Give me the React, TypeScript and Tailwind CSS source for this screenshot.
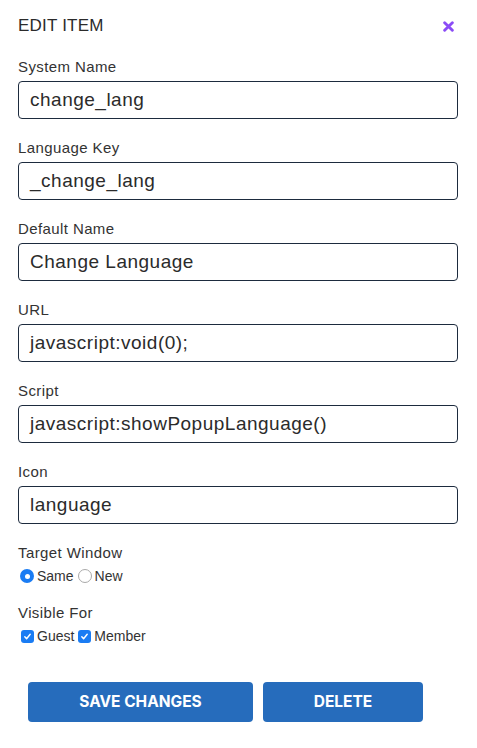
import React from "react";

const fields = [
  ["System Name", "change_lang"],
  ["Language Key", "_change_lang"],
  ["Default Name", "Change Language"],
  ["URL", "javascript:void(0);"],
  ["Script", "javascript:showPopupLanguage()"],
  ["Icon", "language"],
] as const;

function Radio({ checked, label }: { checked?: boolean; label: string }) {
  return (
    <label className="flex items-center gap-[3px]">
      {checked ? (
        <span className="w-[14px] h-[14px] rounded-full bg-[#1a7cf3] grid place-items-center">
          <span className="w-[5px] h-[5px] rounded-full bg-white" />
        </span>
      ) : (
        <span className="w-[14px] h-[14px] rounded-full border border-[#a9a9a9] bg-white" />
      )}
      <span>{label}</span>
    </label>
  );
}

function Check({ label }: { label: string }) {
  return (
    <label className="flex items-center gap-[3px]">
      <span className="w-[13px] h-[13px] rounded-[3px] bg-[#1a7cf3] grid place-items-center">
        <svg width="9" height="9" viewBox="0 0 10 10" fill="none" stroke="white" strokeWidth="1.6" strokeLinecap="round" strokeLinejoin="round">
          <path d="M2 5.3l2 2.2 4-5" />
        </svg>
      </span>
      <span>{label}</span>
    </label>
  );
}

export default function App() {
  return (
    <div className="w-[477px] h-[748px] bg-white pl-[18px] pr-[19px] pt-[16px] text-[#333] font-[family-name:'Liberation_Sans',Arial,sans-serif]">
      <div className="flex items-center justify-between h-[20px]">
        <h1 className="text-[17px] leading-[20px] tracking-[0.2px] text-[#2b2b2b]">EDIT ITEM</h1>
        <svg width="11" height="11" viewBox="0 0 10 10" className="mr-[4px]" stroke="#8b4cf6" strokeWidth="2.6" strokeLinecap="round">
          <path d="M1.5 1.5l7 7M8.5 1.5l-7 7" />
        </svg>
      </div>

      <div className="mt-[21px] flex flex-col gap-[19px]">
        {fields.map(([k, v]) => (
          <div key={k}>
            <div className="text-[15px] leading-[20px] tracking-[0.4px] text-[#333]">{k}</div>
            <div className="mt-[4px] h-[38px] w-[440px] border border-[#1d2b3e] rounded-[4px] px-[11px] flex items-center text-[19px] tracking-[0.5px] text-[#2b2b2b]">
              {v}
            </div>
          </div>
        ))}

        <div>
          <div className="text-[15px] leading-[20px] tracking-[0.4px]">Target Window</div>
          <div className="mt-[3px] h-[20px] flex items-center gap-[4px] text-[14px] pl-[2px]">
            <Radio checked label="Same" />
            <Radio label="New" />
          </div>
        </div>
      </div>

      <div className="mt-[17px]">
        <div className="text-[15px] leading-[20px] tracking-[0.4px]">Visible For</div>
        <div className="mt-[3px] h-[20px] flex items-center gap-[4px] text-[14px] pl-[3px]">
          <Check label="Guest" />
          <Check label="Member" />
        </div>
      </div>

      <div className="mt-[36px] ml-[10px] flex gap-[10px] font-[family-name:Inter,sans-serif]">
        <button className="w-[225px] h-[40px] rounded-[4px] bg-[#266cbc] text-white font-bold text-[15.5px]">
          SAVE CHANGES
        </button>
        <button className="w-[160px] h-[40px] rounded-[4px] bg-[#266cbc] text-white font-bold text-[15.5px]">
          DELETE
        </button>
      </div>
    </div>
  );
}
